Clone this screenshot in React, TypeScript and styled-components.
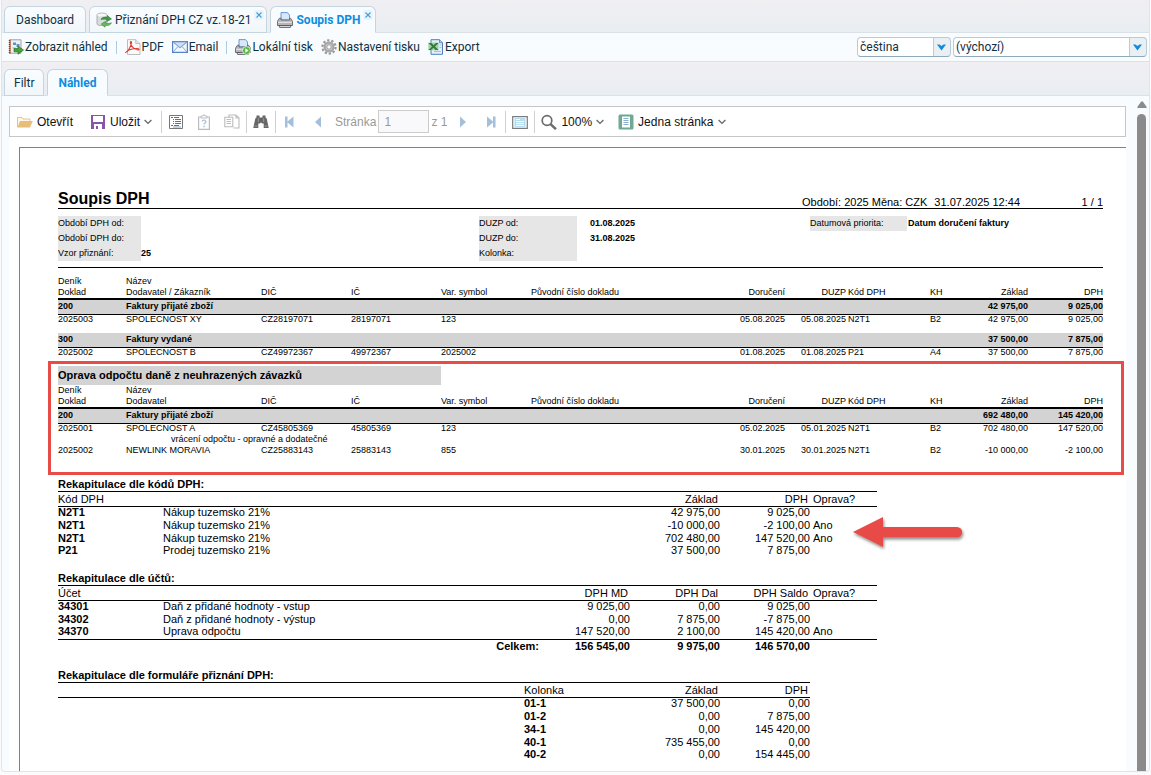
import React from "react";
import styled, { createGlobalStyle, css } from "styled-components";

const ui = `Roboto, "Open Sans", "Liberation Sans", sans-serif`;
const doc = `"Liberation Sans", Arial, sans-serif`;

const GlobalStyle = createGlobalStyle`
  *, *::before, *::after { box-sizing: border-box; }
  body { margin: 0; background: #fafbfc; font-family: ${ui}; color: #123; }
  button, input, select { font: inherit; color: inherit; margin: 0; }
  svg { display: block; flex: none; }
  h1, h2, dl, dd, p { margin: 0; }
`;

/* ---------- application chrome ---------- */

const Shell = styled.div`
  display: flex;
  flex-direction: column;
  min-height: calc(100vh - 3px);
  margin: 0 1px;
  border: solid #dfe5e9;
  border-width: 0 1px 1px;
  border-radius: 0 0 4px 4px;
  background: #f8fcff;
  font-size: 12px;
  line-height: 16px;
`;

const TabStrip = styled.div`
  display: flex;
  align-items: flex-end;
  gap: 3px;
  padding: 6px 2px 0;
  background: linear-gradient(#f0eff2, #e9eef2);
  border-bottom: 1px solid #dbe2e7;
`;

const SubTabStrip = styled(TabStrip)`
  padding-top: 7px;
`;

const Tab = styled.button<{ $active?: boolean; $icon?: boolean; $pad?: number }>`
  display: flex;
  align-items: center;
  justify-content: center;
  gap: 3px;
  height: 27px;
  margin-bottom: -1px;
  padding: 0 ${(p) => (p.$icon ? 2 : p.$pad ?? 9)}px 0 ${(p) => (p.$icon ? 6 : p.$pad ?? 9)}px;
  border: 1px solid #c4d5df;
  border-bottom-color: ${(p) => (p.$active ? "#f8fcff" : "#c4d5df")};
  border-radius: 6px 6px 0 0;
  background: ${(p) => (p.$active ? "#f8fcff" : "linear-gradient(#fafdff, #f1f6fa)")};
  color: ${(p) => (p.$active ? "#0d8ce0" : "#10303f")};
  font-weight: ${(p) => (p.$active ? 700 : 400)};
  white-space: nowrap;
`;

const Close = styled.span`
  display: grid;
  place-items: center;
  width: 10px;
  height: 10px;
  margin-bottom: 9px;
  border-radius: 2px;
  background: #e9f4fb;
`;

const ActionBar = styled.div`
  display: flex;
  align-items: center;
  gap: 8px;
  height: 29px;
  padding: 0 2px 0 6px;
  border-bottom: 1px solid #dbe2e7;
  color: #10303f;
`;

const Action = styled.button`
  display: flex;
  align-items: center;
  gap: 1px;
  padding: 0;
  border: 0;
  background: none;
  white-space: nowrap;
`;

const ActionDivider = styled.span`
  width: 1px;
  height: 13px;
  background: #a9cbe6;
`;

const Selects = styled.div`
  display: flex;
  gap: 2px;
  margin-left: auto;
`;

const SelectBox = styled.label<{ $width: number }>`
  display: flex;
  width: ${(p) => p.$width}px;
  height: 20px;
  border: 1px solid #b9cbd6;
  border-bottom-color: #8fa9b8;
  border-radius: 4px;
  background: linear-gradient(to left, #e9eff3 16px, #b9cbd6 16px, #b9cbd6 17px, #fff 17px);
  position: relative;

  svg {
    position: absolute;
    right: 4px;
    top: 6px;
    pointer-events: none;
  }
`;

const Select = styled.select`
  flex: 1;
  min-width: 0;
  padding: 0 18px 0 2px;
  border: 0;
  background: none;
  appearance: none;
`;

/* ---------- report viewer ---------- */

const Viewer = styled.main`
  flex: 1;
  display: flex;
  gap: 10px;
  padding: 5px 2px 0 7px;
`;

const ViewerBody = styled.div`
  flex: 1;
  min-width: 0;
  display: flex;
  flex-direction: column;
  margin-top: 5px;
`;

const ViewerBar = styled.div`
  display: flex;
  align-items: center;
  height: 31px;
  border: 1px solid #c6c6c6;
  background: #fff;
  color: #111;
  font-family: ${doc};
  font-size: 12px;
`;

const Group = styled.div`
  display: flex;
  gap: 3px;
  padding-right: 1px;
`;

const ViewerButton = styled.button`
  display: flex;
  align-items: center;
  gap: 4px;
  height: 24px;
  padding: 0 8px 0 6px;
  border: 0;
  background: none;
  white-space: nowrap;

  &:first-child { padding-left: 7px; }
`;

const IconButton = styled(ViewerButton)`
  && {
    justify-content: center;
    width: 28px;
    padding: 0;
  }
`;

const Divider = styled.span`
  width: 1px;
  height: 22px;
  background: #d0d0d0;
`;

const PageLabel = styled.label`
  display: flex;
  align-items: center;
  gap: 2px;
  padding: 0 2px 0 3px;
  color: #999;
`;

const PageInput = styled.input`
  width: 51px;
  height: 23px;
  padding: 0 5px;
  border: 1px solid #ccc;
  background: #f9f8fa;
  color: #999;
`;

const Canvas = styled.div`
  flex: 1;
  padding: 10px 0 0 10px;
  background: #fff;
`;

const Page = styled.article`
  height: 100%;
  padding: 42px 23px 8px 38px;
  border: solid #808080;
  border-width: 1px 0 0 1px;
  font-family: ${doc};
  font-size: 9px;
  line-height: 11px;
  color: #000;
`;

const ScrollBar = styled.div`
  display: flex;
  flex-direction: column;
  align-items: center;
  gap: 6px;
  width: 11px;

  svg { width: 10px; }
`;

const Thumb = styled.div`
  flex: 1;
  width: 9px;
  border-radius: 5px 5px 0 0;
  background: #8b8b8b;
`;

/* ---------- report content ---------- */

const TitleRow = styled.header`
  display: flex;
  align-items: flex-end;
  gap: 7px;
  border-bottom: 1px solid #000;
  font-size: 11px;
  line-height: 12px;
  white-space: nowrap;
`;

const Title = styled.h1`
  margin-right: auto;
  font-size: 16px;
  line-height: 18px;
`;

const PageNumber = styled.span`
  width: 76px;
  text-align: right;
`;

const Params = styled.div`
  display: grid;
  grid-template-columns: 421px 331px 1fr;
  align-items: start;
  padding: 7px 0 6px;
  border-bottom: 1px solid #000;
  line-height: 15px;
`;

const ParamList = styled.dl<{ $label: number; $pad?: number }>`
  display: grid;
  grid-template-columns: ${(p) => p.$label}px 1fr;

  dt { background: #e6e6e6; }
  dd { padding-left: ${(p) => p.$pad ?? 0}px; font-weight: 700; }
`;

const Sheet = styled.table<{ $top?: number }>`
  width: 100%;
  margin-top: ${(p) => p.$top ?? 0}px;
  table-layout: fixed;
  border-collapse: separate;
  border-spacing: 0;
  white-space: nowrap;

  td, th { padding: 0; text-align: left; vertical-align: top; font-weight: 400; }
  td:nth-child(7), td:nth-child(8), td:nth-child(11), td:nth-child(12),
  th:nth-child(7), th:nth-child(8), th:nth-child(11), th:nth-child(12) { text-align: right; }
  td:nth-child(9), th:nth-child(9) { padding-left: 2px; }
  thead tr:last-child th { border-bottom: 2px solid #000; }
`;

const JournalRow = styled.tr`
  background: #d3d3d3;

  && td { height: 15px; padding-top: 1px; border-bottom: 1px solid #000; font-weight: 700; }
`;

const DataRow = styled.tr<{ $tall?: boolean }>`
  line-height: 9px;

  && td { height: ${(p) => (p.$tall ? 18 : 11)}px; }
`;

const NoteRow = styled(DataRow)`
  && td:last-child { padding-left: 45px; text-align: left; }
`;

const Highlight = styled.section`
  min-height: 114px;
  margin: 2px -21px 3px -10px;
  padding: 2px 18px 15px 7px;
  border: 3px solid #e84c46;
`;

const SectionTitle = styled.h2`
  width: 383px;
  background: #d3d3d3;
  font-size: 11px;
  line-height: 19px;
`;

const Recaps = styled.div`
  position: relative;
  font-size: 11px;
`;

const Recap = styled.table<{ $width: number; $after: number }>`
  width: 100%;
  max-width: ${(p) => p.$width}px;
  margin-bottom: ${(p) => p.$after}px;
  table-layout: fixed;
  border-collapse: separate;
  border-spacing: 0;
  white-space: nowrap;

  caption { text-align: left; font-weight: 700; line-height: 13px; }
  th, td { padding: 0; text-align: left; font-weight: 400; vertical-align: top; }
  thead th { height: 16px; line-height: 14px; border: solid #000; border-width: 1px 0; }
  tbody td { height: 13px; line-height: 10px; }
  tbody tr:nth-last-child(2) td { height: 12px; }
  tfoot td { height: 14px; line-height: 13px; border-top: 1px solid #000; font-weight: 700; }
`;

const keyCell = css`
  && { font-weight: 700; }
`;

const Key = styled.td`
  ${keyCell}
`;

const Num = styled.td`
  && { text-align: right; }
`;

const NumHead = styled.th`
  && { padding-right: 2px; text-align: right; }
`;

const AnswerHead = styled.th`
  && { padding-left: 3px; }
`;

const Answer = styled.td`
  && { padding-left: 3px; }
`;

const TotalLabel = styled.td`
  && { padding-right: 1px; text-align: right; }
`;

const ArrowMark = styled.svg`
  position: absolute;
  left: 790px;
  top: 34px;
`;

/* ---------- icons ---------- */

const Icon = ({ children, size = 16 }: { children: React.ReactNode; size?: number }) => (
  <svg width={size} height={size} viewBox="0 0 16 16" fill="none" aria-hidden="true">
    {children}
  </svg>
);

const CloseIcon = () => (
  <svg width="6" height="6" viewBox="0 0 6 6" aria-hidden="true">
    <path d="M.5.5l5 5M5.500.5l-5 5" stroke="#3fa0dc" strokeWidth="1.1" />
  </svg>
);

const SyncIcon = () => (
  <Icon>
    <path d="M1 3c0-2.500 10-2.500 10 0v9c0 2-10 2-10 0z" fill="#d9dcdc" stroke="#9aa0a0" strokeWidth=".8" />
    <ellipse cx="6" cy="3" rx="4.600" ry="1.500" fill="#f6f7f7" />
    <path d="M5 7.500c1-2.500 4-3 6-2l.3-2L15.500 7l-4.700 2.500.1-1.800c-2-.8-3.400-.6-5.900-.2z" fill="#3f9c45" stroke="#20702a" strokeWidth=".5" />
    <path d="M15.500 10.800c-1.200 2.600-4 3.200-6.200 2.400l-.3 2L5.200 12l4.400-2.700v1.800c2 .7 3.600.3 5.900-.3z" fill="#69b95c" stroke="#2b7c33" strokeWidth=".5" />
  </Icon>
);

const printerBody = (
  <>
    <path d="M4 .6h6.500L12.500 3v5h-8.500z" fill="#d6e8fb" stroke="#5b8fcb" strokeWidth=".9" />
    <path d="M2.500 6.200h1.500V8h8.500V6.200h1l2 3v4.300H.5V9.200z" fill="#b4b6b9" stroke="#63666b" strokeWidth=".9" />
    <path d="M1.200 10.300h13.600" stroke="#ececec" />
    <path d="M2 13.500h12l-.6 1.900H2.600z" fill="#e4e4e4" stroke="#54575c" strokeWidth=".9" />
  </>
);

const PrinterIcon = () => <Icon>{printerBody}</Icon>;

const LocalPrintIcon = () => (
  <Icon>
    {printerBody}
    <circle cx="11.500" cy="11.500" r="4" fill="#58b843" stroke="#e9f6e4" strokeWidth=".8" />
    <path d="M10.300 9.300v4.400l3.300-2.200z" fill="#fff" />
  </Icon>
);

const PreviewIcon = () => (
  <Icon>
    <path d="M2 .8h11v13.400H2z" fill="#eef2f6" stroke="#8f98a2" strokeWidth=".9" />
    <path d="M1 .5h2v14.500H1z" fill="#c98e6d" />
    <path d="M1.500 1v14" stroke="#7c3f26" strokeWidth="1.400" strokeDasharray="1 1" />
    <path d="M5 3.500h3V6H5zM8.500 5h3v3h-3z" fill="#5d8fd6" />
    <path d="M4.500 9h3" stroke="#9aa7b4" />
    <path d="M6 9.600h4V7.200L15.500 11 10 15.200v-2.500H6z" fill="#4aa23a" stroke="#286e1d" strokeWidth=".7" />
  </Icon>
);

const PdfIcon = () => (
  <Icon>
    <path d="M2.500.7h8.200L15 4.500v11H2.500z" fill="#fafafa" stroke="#b5b5b5" strokeWidth=".9" />
    <path d="M10.700.7v3.800H15" fill="#e4e4e4" stroke="#b5b5b5" strokeWidth=".8" />
    <path d="M.8 13.300c1.800-.4 5.400-5.800 5.700-9.500.2-1.900-1.500-1.600-1.100.2.6 3 3.400 6.600 7.600 7 1.500.1 1.300-1.500-.4-1.500-4.300-.1-9.500 1.400-11.800 3.800z" stroke="#dc3a2e" strokeWidth="1.100" />
  </Icon>
);

const MailIcon = () => (
  <Icon>
    <path d="M.6 2.600h14.800v10.800H.6z" fill="#f2f7fd" stroke="#5585c8" strokeWidth="1.200" />
    <path d="M1 3l7 6 7-6M1 13l5-5.500M15 13l-5-5.500" stroke="#84a9da" strokeWidth="1" />
    <path d="M1.500 3h13L8 8.500z" fill="#cfe0f5" stroke="#6f98d1" strokeWidth=".7" />
  </Icon>
);

const GearIcon = () => (
  <Icon>
    <circle cx="8" cy="8" r="6.600" stroke="#999" strokeWidth="2.200" strokeDasharray="2.300 1.846" />
    <circle cx="8" cy="8" r="4.400" fill="#d2d2d2" stroke="#a8a8a8" strokeWidth="2.400" />
    <circle cx="8" cy="8" r="2.200" fill="#f8fcff" stroke="#8a8a8a" strokeWidth=".8" />
  </Icon>
);

const ExcelIcon = () => (
  <Icon>
    <path d="M3 .7h8.500l3 3v11.600H3z" fill="#e3effc" stroke="#4d7fbf" strokeWidth="1" />
    <path d="M11.500.7v3h3" fill="#b7d1f0" stroke="#4d7fbf" strokeWidth=".8" />
    <path d="M6 12.500h7M11.500 6h2M11.500 8.500h2" stroke="#a5c0e0" />
    <path d="M.3 3.500h10.200v7.800H.3z" fill="#a9d0a4" />
    <path d="M.5 4h3l2 2.200L8 4h2.500L7 7.500l3.500 3.500h-3L5.500 8.800 3 11H.5L4 7.400z" fill="#2f7d38" />
  </Icon>
);

const DropIcon = () => (
  <svg width="9" height="7" viewBox="0 0 9 7" aria-hidden="true">
    <path d="M0 .5l2.500 0L4.500 2l2-1.500L9 .5 4.500 6.500z" fill="#0d8ce0" />
  </svg>
);

const FolderIcon = () => (
  <Icon>
    <path d="M.5 13V3.500h4.500l1 1.500h7v2" fill="#fff7e8" stroke="#e0bd82" strokeWidth=".9" />
    <path d="M3 7h12.800L13 13.600H.4z" fill="#e8bd78" />
  </Icon>
);

const SaveIcon = () => (
  <Icon>
    <path d="M1 1h14v14H1z" fill="#8a55a8" />
    <path d="M3 2h10v6H3zM4 10h8v5H4z" fill="#fff" />
    <path d="M6 12h2v3H6z" fill="#8a55a8" />
  </Icon>
);

const ParamsIcon = () => (
  <Icon>
    <path d="M1.500 1.500h13v13h-13z" fill="#fff" stroke="#777" />
    <path d="M3 3.500h2M6 3.500h5M5 5.500h1M7 5.500h6M5 7.500h1M7 7.500h6M5 9.500h1M7 9.500h6M3 11.500h2M6 11.500h5" stroke="#3f78b5" />
    <path d="M5 13h8" stroke="#7fa6cf" />
  </Icon>
);

const HelpIcon = () => (
  <Icon>
    <path d="M2.600 3h10.800v12.300H2.600z" stroke="#bcbcbc" strokeWidth="1.200" />
    <path d="M5 2h2l1-1.500L9 2h2v2H5z" fill="#fff" stroke="#bcbcbc" />
    <path d="M6.200 7.500c.2-2 3.600-1.800 3.600.2 0 1.300-1.800 1.300-1.800 2.800M8 11.800v1.400" stroke="#a9c3dc" strokeWidth="1.400" />
  </Icon>
);

const CopyIcon = () => (
  <Icon>
    <path d="M5 3V1h7l3 3v10H9.500M12 1v3h3" stroke="#bcbcbc" strokeWidth="1.100" />
    <path d="M.8 3.200h8v9.600h-8z" fill="#fff" stroke="#bcbcbc" strokeWidth="1.100" />
    <path d="M2.500 5.500H7M2.500 7.500H7M2.500 9.500H7" stroke="#a9c3dc" />
  </Icon>
);

const FindIcon = () => (
  <Icon>
    <path d="M3.500 1.500h3v2h3v-2h3v2l1.200 1L15.700 14h-5V9.500H9.300L8 8.500l-1.300 1H5.300V14h-5L2.300 4.500l1.200-1z" fill="#666" />
    <path d="M5.300 4v4M10.700 4v4M1.500 12h3M11.500 12h3" stroke="#aaa" strokeWidth=".8" />
  </Icon>
);

const FirstIcon = () => (
  <Icon>
    <path d="M3 2.500h2.500v5L11.500 2.500v11L5.500 8.500v5H3z" fill="#a3bfdc" />
  </Icon>
);

const PrevIcon = () => (
  <Icon>
    <path d="M11 2.500v11L5 8z" fill="#a3bfdc" />
  </Icon>
);

const NextIcon = () => (
  <Icon>
    <path d="M5 2.500v11L11 8z" fill="#a3bfdc" />
  </Icon>
);

const LastIcon = () => (
  <Icon>
    <path d="M12.500 2.500H10v5L4 2.500v11l6-5v5h2.500z" fill="#a3bfdc" />
  </Icon>
);

const FullScreenIcon = () => (
  <Icon>
    <path d="M.7 2.600h14.600v11.800H.7z" fill="#fff" stroke="#7c7c7c" strokeWidth="1.200" />
    <path d="M2.500 4h11v9h-11z" fill="#b5dcef" />
    <path d="M4 5.500h4M4 7.500h8M4 9.500h8M4 11.500h8" stroke="#fff" />
  </Icon>
);

const ZoomIcon = () => (
  <Icon>
    <circle cx="6" cy="6.500" r="4.800" stroke="#6c6c6c" strokeWidth="1.700" />
    <path d="M9.500 10.200l5.500 5" stroke="#6c6c6c" strokeWidth="2.500" />
  </Icon>
);

const OnePageIcon = () => (
  <Icon>
    <rect x=".5" y=".5" width="15" height="15" rx="1.500" fill="#6fa893" />
    <path d="M4 2.500h8v11H4z" fill="#fff" />
    <path d="M5.500 4.500h5M5.500 6.500h5M5.500 8.500h5M5.500 10.500h5" stroke="#8fb0cd" />
  </Icon>
);

const ChevronIcon = () => (
  <svg width="8" height="6" viewBox="0 0 8 6" fill="none" aria-hidden="true">
    <path d="M.6 1L4 4.400 7.400 1" stroke="#666" strokeWidth="1.300" />
  </svg>
);

/* ---------- data ---------- */

const journalColumns = [68, 135, 90, 90, 90, 0, 94, 61, 84, 36, 62, 75];

type Line = { cells: string[]; note?: string };
type Journal = { code: string; name: string; base: string; vat: string; lines: Line[] };

const invoices: Journal[] = [
  {
    code: "200", name: "Faktury přijaté zboží", base: "42 975,00", vat: "9 025,00",
    lines: [{ cells: ["2025003", "SPOLECNOST XY", "CZ28197071", "28197071", "123", "", "05.08.2025", "05.08.2025", "N2T1", "B2", "42 975,00", "9 025,00"] }],
  },
  {
    code: "300", name: "Faktury vydané", base: "37 500,00", vat: "7 875,00",
    lines: [{ cells: ["2025002", "SPOLECNOST B", "CZ49972367", "49972367", "2025002", "", "01.08.2025", "01.08.2025", "P21", "A4", "37 500,00", "7 875,00"] }],
  },
];

const corrections: Journal[] = [
  {
    code: "200", name: "Faktury přijaté zboží", base: "692 480,00", vat: "145 420,00",
    lines: [
      {
        cells: ["2025001", "SPOLECNOST A", "CZ45805369", "45805369", "123", "", "05.02.2025", "05.01.2025", "N2T1", "B2", "702 480,00", "147 520,00"],
        note: "vrácení odpočtu - opravné a dodatečné",
      },
      { cells: ["2025002", "NEWLINK MORAVIA", "CZ25883143", "25883143", "855", "", "30.01.2025", "30.01.2025", "N2T1", "B2", "-10 000,00", "-2 100,00"] },
    ],
  },
];

const byCode = [
  ["N2T1", "Nákup tuzemsko 21%", "42 975,00", "9 025,00", ""],
  ["N2T1", "Nákup tuzemsko 21%", "-10 000,00", "-2 100,00", "Ano"],
  ["N2T1", "Nákup tuzemsko 21%", "702 480,00", "147 520,00", "Ano"],
  ["P21", "Prodej tuzemsko 21%", "37 500,00", "7 875,00", ""],
];

const byAccount = [
  ["34301", "Daň z přidané hodnoty - vstup", "9 025,00", "0,00", "9 025,00", ""],
  ["34302", "Daň z přidané hodnoty - výstup", "0,00", "7 875,00", "-7 875,00", ""],
  ["34370", "Uprava odpočtu", "147 520,00", "2 100,00", "145 420,00", "Ano"],
];

const byForm = [
  ["01-1", "37 500,00", "0,00"],
  ["01-2", "0,00", "7 875,00"],
  ["34-1", "0,00", "145 420,00"],
  ["40-1", "735 455,00", "0,00"],
  ["40-2", "0,00", "154 445,00"],
];

const Columns = ({ widths }: { widths: number[] }) => (
  <colgroup>
    {widths.map((w, i) => (
      <col key={i} width={w || undefined} />
    ))}
  </colgroup>
);

const JournalTable = ({ journals, partner, top }: { journals: Journal[]; partner: string; top?: number }) => (
  <Sheet $top={top}>
    <Columns widths={journalColumns} />
    <thead>
      <tr>
        <th>Deník</th>
        <th>Název</th>
        <th colSpan={10} />
      </tr>
      <tr>
        {["Doklad", partner, "DIČ", "IČ", "Var. symbol", "Původní číslo dokladu", "Doručení", "DUZP", "Kód DPH", "KH", "Základ", "DPH"].map((h) => (
          <th key={h}>{h}</th>
        ))}
      </tr>
    </thead>
    <tbody>
      {journals.map((j, ji) => (
        <React.Fragment key={j.code}>
          <JournalRow>
            {[j.code, j.name, "", "", "", "", "", "", "", "", j.base, j.vat].map((c, i) => (
              <td key={i}>{c}</td>
            ))}
          </JournalRow>
          {j.lines.map((line) => (
            <React.Fragment key={line.cells[0]}>
              <DataRow $tall={ji < journals.length - 1}>
                {line.cells.map((c, i) => (
                  <td key={i}>{c}</td>
                ))}
              </DataRow>
              {line.note && (
                <NoteRow>
                  <td />
                  <td colSpan={11}>{line.note}</td>
                </NoteRow>
              )}
            </React.Fragment>
          ))}
        </React.Fragment>
      ))}
    </tbody>
  </Sheet>
);

export default function App() {
  return (
    <>
      <GlobalStyle />
      <Shell>
        <TabStrip role="tablist">
          <Tab role="tab" $pad={11}>Dashboard</Tab>
          <Tab role="tab" $icon>
            <SyncIcon />
            Přiznání DPH CZ vz.18-21
            <Close><CloseIcon /></Close>
          </Tab>
          <Tab role="tab" aria-selected $active $icon>
            <PrinterIcon />
            Soupis DPH
            <Close><CloseIcon /></Close>
          </Tab>
        </TabStrip>

        <ActionBar>
          <Action><PreviewIcon />Zobrazit náhled</Action>
          <ActionDivider />
          <Action><PdfIcon />PDF</Action>
          <Action><MailIcon />Email</Action>
          <ActionDivider />
          <Action><LocalPrintIcon />Lokální tisk</Action>
          <Action><GearIcon />Nastavení tisku</Action>
          <Action><ExcelIcon />Export</Action>
          <Selects>
            <SelectBox $width={94}>
              <Select aria-label="Jazyk"><option>čeština</option></Select>
              <DropIcon />
            </SelectBox>
            <SelectBox $width={194}>
              <Select aria-label="Šablona"><option>(výchozí)</option></Select>
              <DropIcon />
            </SelectBox>
          </Selects>
        </ActionBar>

        <SubTabStrip role="tablist">
          <Tab role="tab">Filtr</Tab>
          <Tab role="tab" aria-selected $active $pad={10}>Náhled</Tab>
        </SubTabStrip>

        <Viewer>
          <ViewerBody>
            <ViewerBar>
              <Group>
                <ViewerButton><FolderIcon />Otevřít</ViewerButton>
                <ViewerButton><SaveIcon />Uložit<ChevronIcon /></ViewerButton>
              </Group>
              <Divider />
              <IconButton aria-label="Parametry"><ParamsIcon /></IconButton>
              <IconButton aria-label="Nápověda"><HelpIcon /></IconButton>
              <IconButton aria-label="Kopírovat"><CopyIcon /></IconButton>
              <Divider />
              <IconButton aria-label="Hledat"><FindIcon /></IconButton>
              <Divider />
              <IconButton aria-label="První"><FirstIcon /></IconButton>
              <IconButton aria-label="Předchozí"><PrevIcon /></IconButton>
              <PageLabel>
                Stránka
                <PageInput defaultValue="1" />
                z 1
              </PageLabel>
              <IconButton aria-label="Další"><NextIcon /></IconButton>
              <IconButton aria-label="Poslední"><LastIcon /></IconButton>
              <Divider />
              <IconButton aria-label="Celá obrazovka"><FullScreenIcon /></IconButton>
              <Divider />
              <ViewerButton><ZoomIcon />100%<ChevronIcon /></ViewerButton>
              <ViewerButton><OnePageIcon />Jedna stránka<ChevronIcon /></ViewerButton>
            </ViewerBar>

            <Canvas>
              <Page>
                <TitleRow>
                  <Title>Soupis DPH</Title>
                  <span>Období: 2025 Měna: CZK</span>
                  <span>31.07.2025 12:44</span>
                  <PageNumber>1 / 1</PageNumber>
                </TitleRow>

                <Params>
                  <ParamList $label={83}>
                    <dt>Období DPH od:</dt><dd />
                    <dt>Období DPH do:</dt><dd />
                    <dt>Vzor přiznání:</dt><dd>25</dd>
                  </ParamList>
                  <ParamList $label={98} $pad={13}>
                    <dt>DUZP od:</dt><dd>01.08.2025</dd>
                    <dt>DUZP do:</dt><dd>31.08.2025</dd>
                    <dt>Kolonka:</dt><dd />
                  </ParamList>
                  <ParamList $label={97} $pad={1}>
                    <dt>Datumová priorita:</dt><dd>Datum doručení faktury</dd>
                  </ParamList>
                </Params>

                <JournalTable journals={invoices} partner="Dodavatel / Zákazník" top={8} />

                <Highlight>
                  <SectionTitle>Oprava odpočtu daně z neuhrazených závazků</SectionTitle>
                  <JournalTable journals={corrections} partner="Dodavatel" />
                </Highlight>

                <Recaps>
                  <Recap $width={819} $after={14}>
                    <caption>Rekapitulace dle kódů DPH:</caption>
                    <Columns widths={[105, 0, 90, 90, 67]} />
                    <thead>
                      <tr>
                        <th>Kód DPH</th>
                        <th />
                        <NumHead>Základ</NumHead>
                        <NumHead>DPH</NumHead>
                        <AnswerHead>Oprava?</AnswerHead>
                      </tr>
                    </thead>
                    <tbody>
                      {byCode.map(([code, name, base, vat, fix], i) => (
                        <tr key={i}>
                          <Key>{code}</Key>
                          <td>{name}</td>
                          <Num>{base}</Num>
                          <Num>{vat}</Num>
                          <Answer>{fix}</Answer>
                        </tr>
                      ))}
                    </tbody>
                  </Recap>

                  <Recap $width={819} $after={16}>
                    <caption>Rekapitulace dle účtů:</caption>
                    <Columns widths={[105, 0, 90, 90, 90, 67]} />
                    <thead>
                      <tr>
                        <th>Účet</th>
                        <th />
                        <NumHead>DPH MD</NumHead>
                        <NumHead>DPH Dal</NumHead>
                        <NumHead>DPH Saldo</NumHead>
                        <AnswerHead>Oprava?</AnswerHead>
                      </tr>
                    </thead>
                    <tbody>
                      {byAccount.map(([code, name, debit, credit, saldo, fix]) => (
                        <tr key={code}>
                          <Key>{code}</Key>
                          <td>{name}</td>
                          <Num>{debit}</Num>
                          <Num>{credit}</Num>
                          <Num>{saldo}</Num>
                          <Answer>{fix}</Answer>
                        </tr>
                      ))}
                    </tbody>
                    <tfoot>
                      <tr>
                        <TotalLabel colSpan={2}>Celkem:</TotalLabel>
                        <Num>156 545,00</Num>
                        <Num>9 975,00</Num>
                        <Num>146 570,00</Num>
                        <td />
                      </tr>
                    </tfoot>
                  </Recap>

                  <Recap $width={752} $after={0}>
                    <caption>Rekapitulace dle formuláře přiznání DPH:</caption>
                    <Columns widths={[0, 106, 90, 90]} />
                    <thead>
                      <tr>
                        <th />
                        <th>Kolonka</th>
                        <NumHead>Základ</NumHead>
                        <NumHead>DPH</NumHead>
                      </tr>
                    </thead>
                    <tbody>
                      {byForm.map(([code, base, vat]) => (
                        <tr key={code}>
                          <td />
                          <Key>{code}</Key>
                          <Num>{base}</Num>
                          <Num>{vat}</Num>
                        </tr>
                      ))}
                    </tbody>
                  </Recap>

                  <ArrowMark width="120" height="44" viewBox="0 0 120 44" aria-hidden="true">
                    <defs>
                      <filter id="shade" x="-10%" y="-20%" width="120%" height="150%">
                        <feDropShadow dx="1" dy="2" stdDeviation="1.500" floodColor="#000" floodOpacity=".45" />
                      </filter>
                    </defs>
                    <path d="M5 20L35 5v10h74a5 5 0 0 1 0 10.500H35V35z" fill="#e84c46" filter="url(#shade)" />
                  </ArrowMark>
                </Recaps>
              </Page>
            </Canvas>
          </ViewerBody>

          <ScrollBar aria-hidden="true">
            <svg width="10" height="7" viewBox="0 0 10 7">
              <path d="M4 .8q1-1 2 0L9.700 6q.2 1-.7 1H1Q.1 7 .3 6z" fill="#8b8b8b" />
            </svg>
            <Thumb />
          </ScrollBar>
        </Viewer>
      </Shell>
    </>
  );
}
